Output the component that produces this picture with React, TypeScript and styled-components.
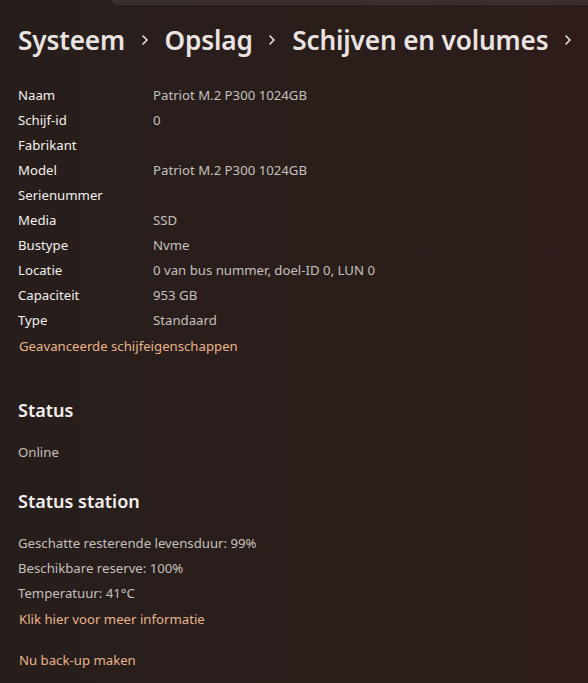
import { Fragment } from "react";
import styled, { createGlobalStyle } from "styled-components";

const GlobalStyle = createGlobalStyle`
  html, body {
    margin: 0;
    padding: 0;
    background: #271e1b;
  }
  body {
    font-family: "Noto Sans", "Open Sans", sans-serif;
  }
`;

const Page = styled.div`
  position: relative;
  width: 588px;
  height: 683px;
  overflow: hidden;
  background: linear-gradient(90deg, #271e1b 0%, #2a1e1b 60%, #2e1c1b 100%);
  box-sizing: border-box;
  padding: 21px 0 0 18px;
`;

const TopCard = styled.div`
  position: absolute;
  top: 0;
  left: 112px;
  right: 0;
  height: 5px;
  background: #39302d;
  border-bottom-left-radius: 6px;
`;

const Breadcrumb = styled.div`
  display: flex;
  align-items: center;
  height: 38px;
  white-space: nowrap;
`;

const Crumb = styled.span`
  font-size: 26.2px;
  font-weight: 600;
  color: #e9e4e2;
  letter-spacing: -0.15px;
`;

const Chevron = styled.span`
  display: inline-flex;
  align-items: center;
  justify-content: center;
  width: 43px;
  color: #e9e4e2;
`;

const InfoTable = styled.div`
  display: grid;
  grid-template-columns: 135px 1fr;
  margin-top: 24px;
`;

const Label = styled.div`
  height: 25px;
  line-height: 25px;
  font-size: 13.2px;
  color: #f2efee;
`;

const Value = styled.div`
  height: 25px;
  line-height: 25px;
  font-size: 13.2px;
  color: #c5c0bd;
`;

const Link = styled.div<{ $top?: number }>`
  height: 25px;
  line-height: 25px;
  font-size: 13.2px;
  color: #e9b48c;
  margin-top: ${(p) => p.$top ?? 0}px;
  padding-left: 1px;
`;

const Heading = styled.div<{ $top: number }>`
  font-size: 18px;
  font-weight: 600;
  color: #f2efee;
  margin-top: ${(p) => p.$top}px;
  height: 28px;
  line-height: 28px;
`;

const Plain = styled.div<{ $top?: number }>`
  height: 25px;
  line-height: 25px;
  font-size: 13.2px;
  color: #c5c0bd;
  margin-top: ${(p) => p.$top ?? 0}px;
`;

const ChevronIcon = () => (
  <svg width="10" height="12" viewBox="0 0 10 12">
    <path
      d="M3 2 L7 6 L3 10"
      fill="none"
      stroke="#e9e4e2"
      strokeWidth="1.6"
      strokeLinecap="round"
      strokeLinejoin="round"
    />
  </svg>
);

const rows: [string, string][] = [
  ["Naam", "Patriot M.2 P300 1024GB"],
  ["Schijf-id", "0"],
  ["Fabrikant", ""],
  ["Model", "Patriot M.2 P300 1024GB"],
  ["Serienummer", ""],
  ["Media", "SSD"],
  ["Bustype", "Nvme"],
  ["Locatie", "0 van bus nummer, doel-ID 0, LUN 0"],
  ["Capaciteit", "953 GB"],
  ["Type", "Standaard"],
];

const crumbs = ["Systeem", "Opslag", "Schijven en volumes"];

export default function App() {
  return (
    <>
      <GlobalStyle />
      <Page>
        <TopCard />
        <Breadcrumb>
          {crumbs.map((c) => (
            <Fragment key={c}>
              <Crumb>{c}</Crumb>
              <Chevron>
                <ChevronIcon />
              </Chevron>
            </Fragment>
          ))}
        </Breadcrumb>

        <InfoTable>
          {rows.map(([label, value]) => (
            <Fragment key={label}>
              <Label>{label}</Label>
              <Value>{value}</Value>
            </Fragment>
          ))}
        </InfoTable>
        <Link $top={1}>Geavanceerde schijfeigenschappen</Link>

        <Heading $top={37}>Status</Heading>
        <Plain $top={16}>Online</Plain>

        <Heading $top={22}>Status station</Heading>
        <Plain $top={16}>Geschatte resterende levensduur: 99%</Plain>
        <Plain>Beschikbare reserve: 100%</Plain>
        <Plain>Temperatuur: 41°C</Plain>
        <Link $top={1}>Klik hier voor meer informatie</Link>
        <Link $top={16}>Nu back-up maken</Link>
      </Page>
    </>
  );
}
